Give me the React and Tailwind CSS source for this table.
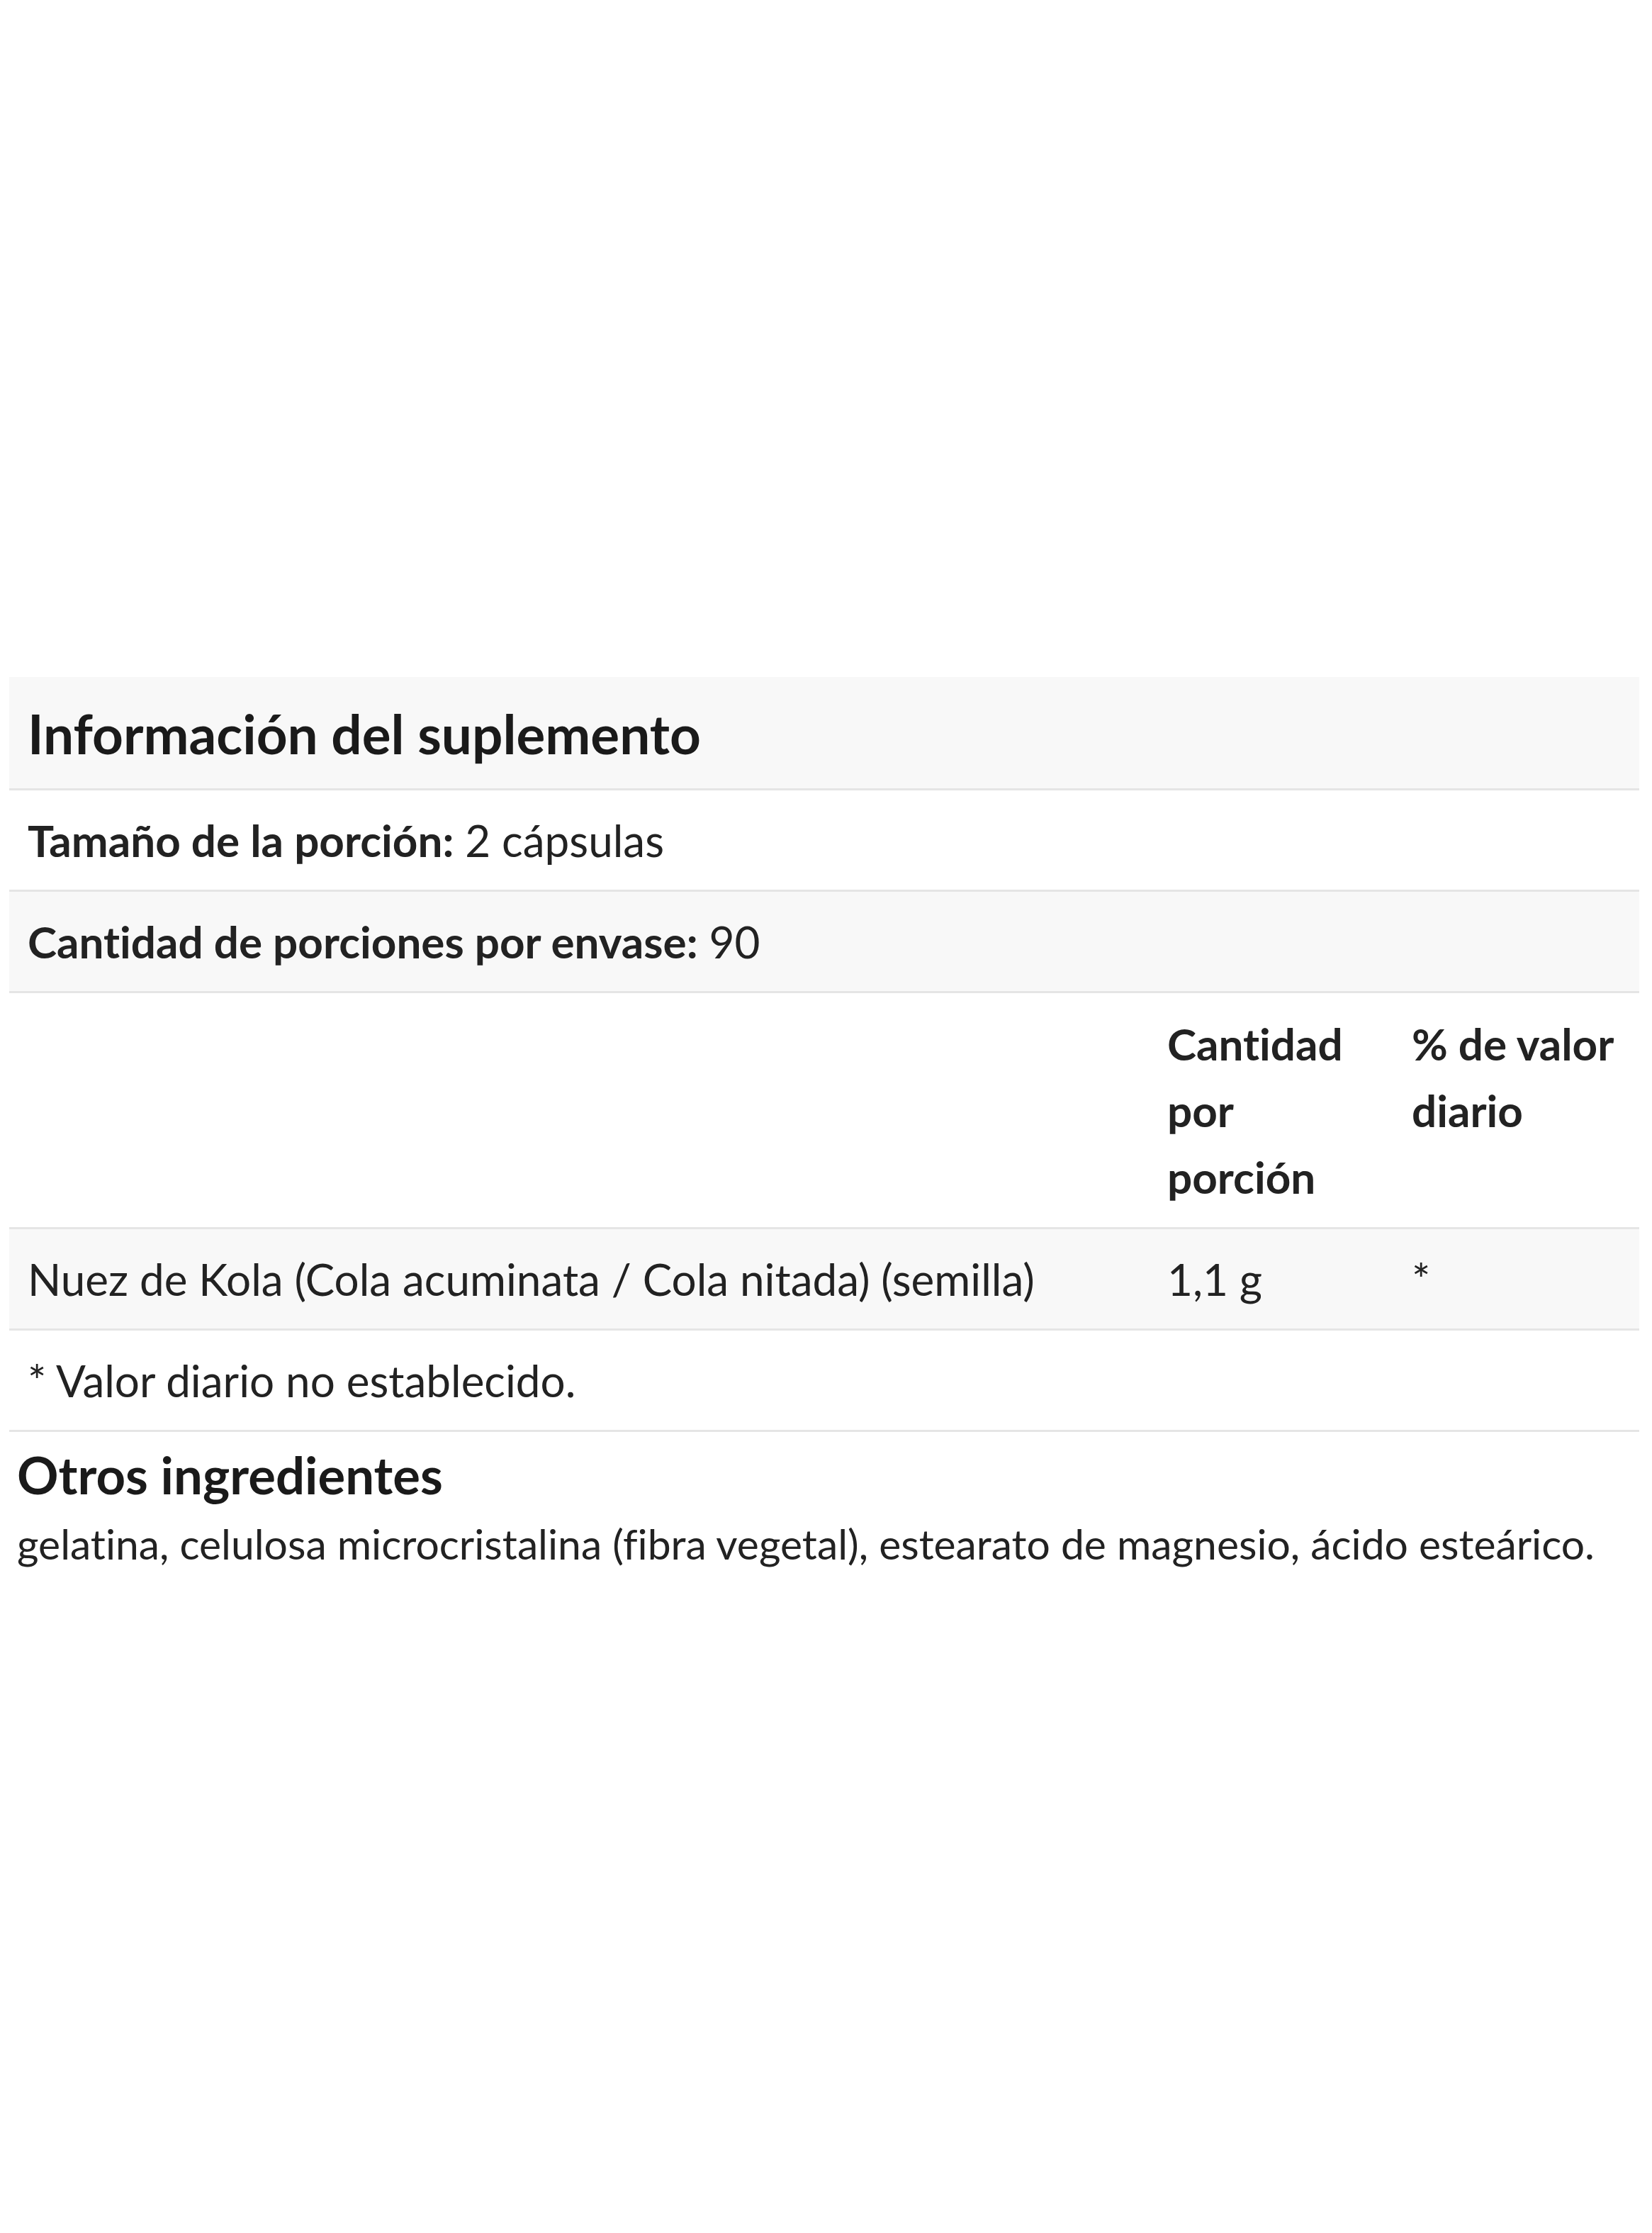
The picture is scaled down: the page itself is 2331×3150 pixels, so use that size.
import React from "react";

const rows = [
  { label: "Tamaño de la porción:", value: "2 cápsulas", shaded: false },
  { label: "Cantidad de porciones por envase:", value: "90", shaded: true },
];

const SupplementFacts = () => {
  return (
    <div
      className="w-full text-[#222222] [font-variant-ligatures:none]"
      style={{ fontFamily: "Lato, 'Noto Sans', sans-serif" }}
    >
      <div className="pt-[955px] pl-[13px] pr-[18px]">
        {/* header */}
        <div className="bg-[#f8f8f8] border-b-[3px] border-[#e5e5e5] pl-[26px] pt-[24px] pb-[23px]">
          <h2 className="text-[76.5px] leading-[110px] font-bold text-[#1a1a1a]">
            Información del suplemento
          </h2>
        </div>

        {rows.map((row) => (
          <div
            key={row.label}
            className={`${row.shaded ? "bg-[#f8f8f8]" : "bg-white"} border-b-[3px] border-[#e5e5e5] pl-[26px] py-[23px] text-[62px] leading-[94px]`}
          >
            <span className="font-bold">{row.label}</span> {row.value}
          </div>
        ))}

        {/* column header */}
        <div className="flex border-b-[3px] border-[#e5e5e5] bg-white py-[24px] text-[62px] leading-[94px] font-bold">
          <div className="w-[1608px] shrink-0" />
          <div className="w-[343px] shrink-0 pl-[26px] pr-[20px]">Cantidad por porción</div>
          <div className="flex-1 pl-[28px] pr-[10px]">% de valor diario</div>
        </div>

        <div className="flex border-b-[3px] border-[#e5e5e5] bg-[#f8f8f8] py-[23px] text-[62px] leading-[94px]">
          <div className="w-[1608px] shrink-0 pl-[26px]">
            Nuez de Kola (Cola acuminata / Cola nitada) (semilla)
          </div>
          <div className="w-[343px] shrink-0 pl-[26px]">1,1 g</div>
          <div className="flex-1 pl-[28px]">*</div>
        </div>

        <div className="border-b-[3px] border-[#e5e5e5] bg-white pl-[26px] py-[23px] text-[62px] leading-[94px]">
          * Valor diario no establecido.
        </div>
      </div>

      <div className="pl-[24px] pr-[18px] pt-[18px]">
        <h3 className="text-[72.5px] leading-[84px] font-bold text-[#1a1a1a]">Otros ingredientes</h3>
        <p className="mt-[18px] text-[58.8px] leading-[76px]">
          gelatina, celulosa microcristalina (fibra vegetal), estearato de magnesio, ácido esteárico.
        </p>
      </div>
    </div>
  );
};

export default function App() {
  return <SupplementFacts />;
}
